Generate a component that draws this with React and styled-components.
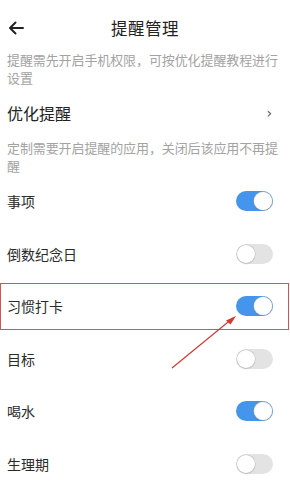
import React, { useState } from 'react';
import styled, { createGlobalStyle } from 'styled-components';

const GlobalStyle = createGlobalStyle`
  html, body {
    margin: 0;
    padding: 0;
    background: #ffffff;
  }
  body {
    font-family: "Noto Sans CJK SC", "Noto Sans", sans-serif;
  }
`;

const Page = styled.div`
  position: relative;
  width: 290px;
  height: 493px;
  overflow: hidden;
  background: #fff;
`;

const Header = styled.div`
  position: relative;
  height: 46px;
  padding-top: 5px;
  display: flex;
  align-items: center;
  justify-content: center;
`;

const BackButton = styled.div`
  position: absolute;
  left: 8px;
  top: 21px;
  width: 16px;
  height: 14px;
  display: flex;
`;

const Title = styled.div`
  font-size: 16.5px;
  color: #222;
  letter-spacing: 0.5px;
`;

const Note = styled.div`
  padding: 0 7px;
  font-size: 13px;
  line-height: 18px;
  color: #a3a3a3;
  letter-spacing: -0.1px;
`;

const LinkRow = styled.div`
  height: 52px;
  margin-top: ${p => p.$mt || 0}px;
  padding: 0 18px 0 7px;
  display: flex;
  align-items: center;
  justify-content: space-between;
  font-size: 16px;
  color: #222;
`;

const Chevron = styled.span`
  font-size: 14px;
  color: #555;
  font-family: "DejaVu Sans", sans-serif;
`;

const Row = styled.div`
  position: relative;
  height: 52.5px;
  padding: 0 17px 0 7px;
  display: flex;
  align-items: center;
  justify-content: space-between;
  font-size: 14px;
  color: #2a2a2a;

  ${p => p.$highlight && `
    &::after {
      content: '';
      position: absolute;
      left: 0;
      right: 1px;
      top: 3px;
      bottom: 3px;
      border: 1px solid #d9534f;
      pointer-events: none;
    }
  `}
`;

const Track = styled.button`
  position: relative;
  width: 37px;
  height: 20px;
  padding: 0;
  border: none;
  border-radius: 10px;
  background: ${p => (p.$on ? '#4595ec' : '#e3e3e3')};
  cursor: pointer;
`;

const Knob = styled.span`
  position: absolute;
  top: 1px;
  left: ${p => (p.$on ? '18px' : '1px')};
  width: 18px;
  height: 18px;
  border-radius: 50%;
  background: #fff;
  box-shadow: 0 0 0 0.5px #bdbdbd, 0 1px 1.5px rgba(0, 0, 0, 0.15);
`;

const Arrow = styled.svg`
  position: absolute;
  left: 0;
  top: 0;
  pointer-events: none;
`;

function Toggle({ on, onClick }) {
  return (
    <Track $on={on} onClick={onClick}>
      <Knob $on={on} />
    </Track>
  );
}

const initial = [
  { name: '事项', on: true },
  { name: '倒数纪念日', on: false },
  { name: '习惯打卡', on: true, highlight: true },
  { name: '目标', on: false },
  { name: '喝水', on: true },
  { name: '生理期', on: false },
];

export default function App() {
  const [items, setItems] = useState(initial);

  const flip = i =>
    setItems(items.map((it, j) => (j === i ? { ...it, on: !it.on } : it)));

  return (
    <Page>
      <GlobalStyle />
      <Header>
        <BackButton>
          <svg width="16" height="14" viewBox="0 0 16 14">
            <path d="M15 7H2.5M7.5 1.5L2 7l5.5 5.5" fill="none" stroke="#222" strokeWidth="2" strokeLinecap="round" strokeLinejoin="round" />
          </svg>
        </BackButton>
        <Title>提醒管理</Title>
      </Header>
      <Note>提醒需先开启手机权限，可按优化提醒教程进行设置</Note>
      <LinkRow>
        优化提醒
        <Chevron>›</Chevron>
      </LinkRow>
      <Note>定制需要开启提醒的应用，关闭后该应用不再提醒</Note>
      {items.map((it, i) => (
        <Row key={it.name} $highlight={it.highlight}>
          {it.name}
          <Toggle on={it.on} onClick={() => flip(i)} />
        </Row>
      ))}
      <Arrow width="290" height="493">
        <line x1="172" y1="368" x2="233" y2="318" stroke="#d23a32" strokeWidth="1.2" />
        <path d="M236 316L226 320.5L230.5 324.5Z" fill="#d23a32" />
      </Arrow>
    </Page>
  );
}
